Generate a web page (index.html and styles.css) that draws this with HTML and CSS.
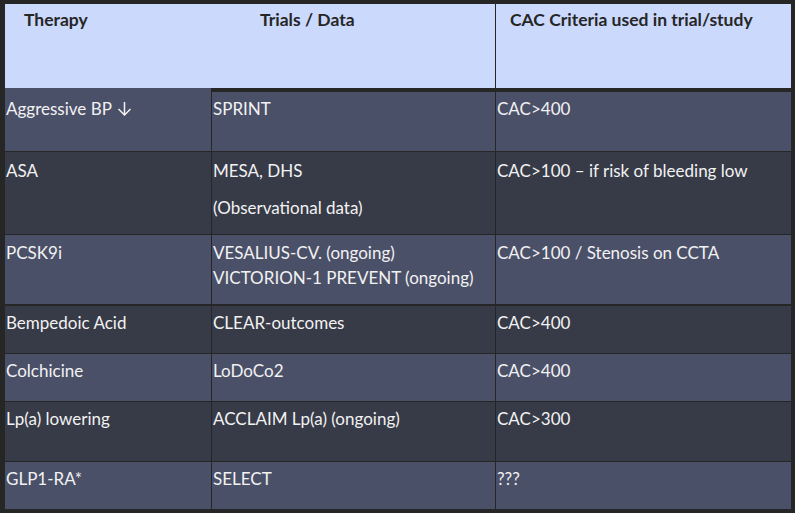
FILE: index.html
```html
<!DOCTYPE html>
<html>
<head>
<meta charset="utf-8">
<link rel="stylesheet" href="styles.css">
</head>
<body>
<div class="table">
  <div class="hcell hspan">
    <span class="h1">Therapy</span>
    <span class="h2">Trials / Data</span>
  </div>
  <div class="hcell hlast"><span class="h3">CAC Criteria used in trial/study</span></div>

  <div class="cell c1 light r1">Aggressive BP <svg class="arrow" width="15" height="15" viewBox="0 0 15 15"><path d="M7.5 1 V14 M1.5 8 L7.5 14 L13.5 8" fill="none" stroke="#f2f2f2" stroke-width="1.5"/></svg></div>
  <div class="cell c2 light r1 top">SPRINT</div>
  <div class="cell c3 light r1 top">CAC&gt;400</div>

  <div class="cell c1 dark r2">ASA</div>
  <div class="cell c2 dark r2"><p>MESA, DHS</p><p class="gap">(Observational data)</p></div>
  <div class="cell c3 dark r2">CAC&gt;100 – if risk of bleeding low</div>

  <div class="cell c1 light r3 thick">PCSK9i</div>
  <div class="cell c2 light r3 thick">VESALIUS-CV. (ongoing)<br>VICTORION-1 PREVENT (ongoing)</div>
  <div class="cell c3 light r3 thick">CAC&gt;100 / Stenosis on CCTA</div>

  <div class="cell c1 dark">Bempedoic Acid</div>
  <div class="cell c2 dark">CLEAR-outcomes</div>
  <div class="cell c3 dark">CAC&gt;400</div>

  <div class="cell c1 light">Colchicine</div>
  <div class="cell c2 light">LoDoCo2</div>
  <div class="cell c3 light">CAC&gt;400</div>

  <div class="cell c1 dark">Lp(a) lowering</div>
  <div class="cell c2 dark">ACCLAIM Lp(a) (ongoing)</div>
  <div class="cell c3 dark">CAC&gt;300</div>

  <div class="cell c1 light last">GLP1-RA*</div>
  <div class="cell c2 light last">SELECT</div>
  <div class="cell c3 light last">???</div>
</div>
</body>
</html>
```
FILE: styles.css
```css
html, body {
  margin: 0;
  padding: 0;
  background: #262626;
}
body {
  padding: 4px 0 0 5px;
  font-family: Lato, "Open Sans", sans-serif;
  font-size: 17px;
  line-height: 25px;
  color: #f2f2f2;
}
.table {
  display: grid;
  width: 786px;
  grid-template-columns: 207px 284px 295px;
  grid-template-rows: 84px 64px 83px 71px 48px 48px 60px 47px;
}
.hcell {
  background: #cbd9fd;
  color: #262626;
  font-weight: bold;
  font-size: 17.5px;
  box-sizing: border-box;
  padding-top: 3px;
}
.hspan {
  grid-column: 1 / span 2;
  display: grid;
  grid-template-columns: 207px 1fr;
  border-right: 1px solid #262626;
}
.h1 { padding-left: 19px; }
.h2 { padding-left: 48px; }
.h3 { margin-left: 14px; }
.cell {
  box-sizing: border-box;
  border-bottom: 1px solid #262626;
  padding: 4px 0 0 1px;
}
.c1, .c2 { border-right: 1px solid #262626; }
.light { background: #4b5069; }
.dark { background: #373a47; }
.r1 { padding-top: 8px; }
.top { border-top: 4px solid #262626; padding-top: 4px; }
.r2 { padding-top: 6px; }
.r3 { padding-top: 5px; }
.thick { border-bottom-width: 2px; }
.last { border-bottom: none; }
p { margin: 0; }
.gap { margin-top: 12px; }
.arrow { vertical-align: -1px; margin-left: 1px; }
```
